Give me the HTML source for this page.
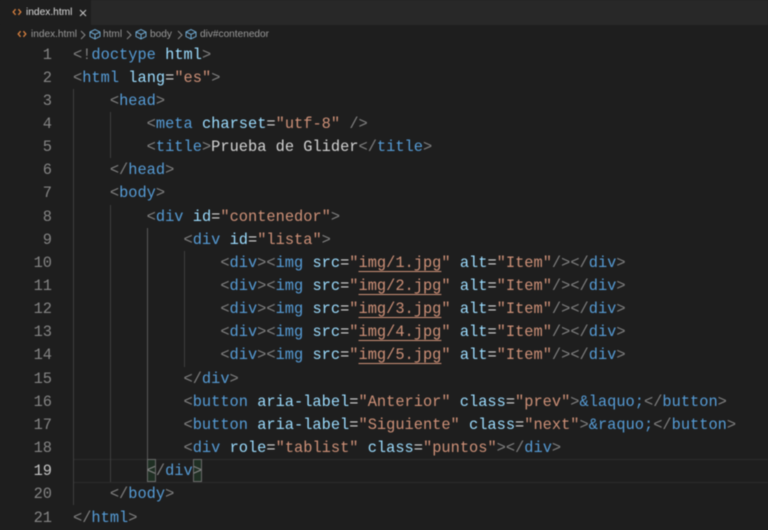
<!DOCTYPE html>
<html lang="es">
<head>
<meta charset="utf-8">
<title>index.html</title>
<style>
html,body{margin:0;padding:0;background:#1e1e1e;}
body{width:768px;height:527px;overflow:hidden;position:relative;font-family:"Liberation Sans",sans-serif;}
#tabs{position:absolute;left:0;top:0;width:768px;height:25px;background:#282828;}
#tab{position:absolute;left:0;top:0;width:91px;height:25px;background:#1e1e1e;}
.ui{position:absolute;white-space:pre;color:#cfcfcf;}
#crumbs span{position:absolute;top:0;white-space:pre;font-size:10.1px;line-height:16px;color:#9a9a9a;}
.ln{position:absolute;left:20px;width:32px;text-align:right;font:15.35px/23.15px "Liberation Mono",monospace;color:#858585;white-space:pre;}
.c{position:absolute;left:73px;font:15.35px/23.15px "Liberation Mono",monospace;color:#d4d4d4;white-space:pre;}
.p{color:#808080}.t{color:#569cd6}.a{color:#9cdcfe}.s{color:#ce9178}.e{color:#569cd6}
.u{text-decoration:underline;text-underline-offset:3.5px;text-decoration-thickness:1.2px;text-decoration-skip-ink:none;}
.g{position:absolute;width:1px;background:#404040;}
#wrap{position:absolute;left:0;top:0;width:768px;height:527px;filter:blur(.4px);}
</style>
</head>
<body>
<div id="wrap">
<div id="tabs"><div id="tab"></div></div>
<svg style="position:absolute;left:12px;top:7px" width="10" height="10" viewBox="0 0 10 10"><path d="M3.6 2.2 L1.2 5 L3.6 7.8 M6.4 2.2 L8.8 5 L6.4 7.8" fill="none" stroke="#d9813f" stroke-width="1.3"/></svg>
<div class="ui" style="left:26px;top:5px;font-size:10.2px;line-height:16px;color:#dcdcdc">index.html</div>
<svg style="position:absolute;left:78px;top:8px" width="10" height="10" viewBox="0 0 10 10"><path d="M2 2 L8 8 M8 2 L2 8" fill="none" stroke="#c8c8c8" stroke-width="1"/></svg>
<div id="crumbs" style="position:absolute;left:0;top:27px;width:768px;height:16px">
<svg style="position:absolute;left:17px;top:2px" width="10" height="10" viewBox="0 0 10 10"><path d="M3.6 2.2 L1.2 5 L3.6 7.8 M6.4 2.2 L8.8 5 L6.4 7.8" fill="none" stroke="#d9813f" stroke-width="1.3"/></svg>
<span style="left:31px">index.html</span>
<svg style="position:absolute;left:80px;top:3px" width="6" height="10" viewBox="0 0 6 10"><path d="M1 1 L5 5 L1 9" fill="none" stroke="#8a8a8a" stroke-width="1"/></svg>
<svg style="position:absolute;left:89px;top:1px" width="12" height="12" viewBox="0 0 12 12"><path d="M1 4 L6 1.5 L11 4 V8.5 L6 11 L1 8.5 Z M1 4 L6 6.5 L11 4 M6 6.5 V11" fill="none" stroke="#6fa8d0" stroke-width="1"/></svg>
<span style="left:103px">html</span>
<svg style="position:absolute;left:126px;top:3px" width="6" height="10" viewBox="0 0 6 10"><path d="M1 1 L5 5 L1 9" fill="none" stroke="#8a8a8a" stroke-width="1"/></svg>
<svg style="position:absolute;left:135px;top:1px" width="12" height="12" viewBox="0 0 12 12"><path d="M1 4 L6 1.5 L11 4 V8.5 L6 11 L1 8.5 Z M1 4 L6 6.5 L11 4 M6 6.5 V11" fill="none" stroke="#6fa8d0" stroke-width="1"/></svg>
<span style="left:150px">body</span>
<svg style="position:absolute;left:177px;top:3px" width="6" height="10" viewBox="0 0 6 10"><path d="M1 1 L5 5 L1 9" fill="none" stroke="#8a8a8a" stroke-width="1"/></svg>
<svg style="position:absolute;left:185px;top:1px" width="12" height="12" viewBox="0 0 12 12"><path d="M1 4 L6 1.5 L11 4 V8.5 L6 11 L1 8.5 Z M1 4 L6 6.5 L11 4 M6 6.5 V11" fill="none" stroke="#6fa8d0" stroke-width="1"/></svg>
<span style="left:200px">div#contenedor</span>
</div>

<!-- active line -->
<div style="position:absolute;left:73px;top:459px;width:695px;height:22px;border-top:1px solid #2c2c2c;border-bottom:1px solid #2c2c2c"></div>
<!-- guides -->
<div class="g" style="left:73px;top:89px;height:416px"></div>
<div class="g" style="left:110px;top:112px;height:46px"></div>
<div class="g" style="left:110px;top:205px;height:277px"></div>
<div class="g" style="left:147px;top:228px;height:231px;background:#5a5a5a"></div>
<div class="g" style="left:184px;top:251px;height:116px"></div>
<!-- bracket match -->
<div style="position:absolute;left:147px;top:459px;width:7px;height:21px;background:#1f2f23;border:1px solid #6a6a6a"></div>
<div style="position:absolute;left:193px;top:459px;width:7px;height:21px;background:#1f2f23;border:1px solid #6a6a6a"></div>

<div class="ln" style="top:44px">1</div><div class="c" style="top:44px"><span class="p">&lt;!</span><span class="t">doctype</span> <span class="a">html</span><span class="p">&gt;</span></div>
<div class="ln" style="top:67px">2</div><div class="c" style="top:67px"><span class="p">&lt;</span><span class="t">html</span> <span class="a">lang</span>=<span class="s">"es"</span><span class="p">&gt;</span></div>
<div class="ln" style="top:90px">3</div><div class="c" style="top:90px">    <span class="p">&lt;</span><span class="t">head</span><span class="p">&gt;</span></div>
<div class="ln" style="top:113px">4</div><div class="c" style="top:113px">        <span class="p">&lt;</span><span class="t">meta</span> <span class="a">charset</span>=<span class="s">"utf-8"</span> <span class="p">/&gt;</span></div>
<div class="ln" style="top:136px">5</div><div class="c" style="top:136px">        <span class="p">&lt;</span><span class="t">title</span><span class="p">&gt;</span>Prueba de Glider<span class="p">&lt;/</span><span class="t">title</span><span class="p">&gt;</span></div>
<div class="ln" style="top:159px">6</div><div class="c" style="top:159px">    <span class="p">&lt;/</span><span class="t">head</span><span class="p">&gt;</span></div>
<div class="ln" style="top:182px">7</div><div class="c" style="top:182px">    <span class="p">&lt;</span><span class="t">body</span><span class="p">&gt;</span></div>
<div class="ln" style="top:206px">8</div><div class="c" style="top:206px">        <span class="p">&lt;</span><span class="t">div</span> <span class="a">id</span>=<span class="s">"contenedor"</span><span class="p">&gt;</span></div>
<div class="ln" style="top:229px">9</div><div class="c" style="top:229px">            <span class="p">&lt;</span><span class="t">div</span> <span class="a">id</span>=<span class="s">"lista"</span><span class="p">&gt;</span></div>
<div class="ln" style="top:252px">10</div><div class="c" style="top:252px">                <span class="p">&lt;</span><span class="t">div</span><span class="p">&gt;&lt;</span><span class="t">img</span> <span class="a">src</span>=<span class="s">"<span class="u">img/1.jpg</span>"</span> <span class="a">alt</span>=<span class="s">"Item"</span><span class="p">/&gt;&lt;/</span><span class="t">div</span><span class="p">&gt;</span></div>
<div class="ln" style="top:275px">11</div><div class="c" style="top:275px">                <span class="p">&lt;</span><span class="t">div</span><span class="p">&gt;&lt;</span><span class="t">img</span> <span class="a">src</span>=<span class="s">"<span class="u">img/2.jpg</span>"</span> <span class="a">alt</span>=<span class="s">"Item"</span><span class="p">/&gt;&lt;/</span><span class="t">div</span><span class="p">&gt;</span></div>
<div class="ln" style="top:298px">12</div><div class="c" style="top:298px">                <span class="p">&lt;</span><span class="t">div</span><span class="p">&gt;&lt;</span><span class="t">img</span> <span class="a">src</span>=<span class="s">"<span class="u">img/3.jpg</span>"</span> <span class="a">alt</span>=<span class="s">"Item"</span><span class="p">/&gt;&lt;/</span><span class="t">div</span><span class="p">&gt;</span></div>
<div class="ln" style="top:321px">13</div><div class="c" style="top:321px">                <span class="p">&lt;</span><span class="t">div</span><span class="p">&gt;&lt;</span><span class="t">img</span> <span class="a">src</span>=<span class="s">"<span class="u">img/4.jpg</span>"</span> <span class="a">alt</span>=<span class="s">"Item"</span><span class="p">/&gt;&lt;/</span><span class="t">div</span><span class="p">&gt;</span></div>
<div class="ln" style="top:344px">14</div><div class="c" style="top:344px">                <span class="p">&lt;</span><span class="t">div</span><span class="p">&gt;&lt;</span><span class="t">img</span> <span class="a">src</span>=<span class="s">"<span class="u">img/5.jpg</span>"</span> <span class="a">alt</span>=<span class="s">"Item"</span><span class="p">/&gt;&lt;/</span><span class="t">div</span><span class="p">&gt;</span></div>
<div class="ln" style="top:368px">15</div><div class="c" style="top:368px">            <span class="p">&lt;/</span><span class="t">div</span><span class="p">&gt;</span></div>
<div class="ln" style="top:391px">16</div><div class="c" style="top:391px">            <span class="p">&lt;</span><span class="t">button</span> <span class="a">aria-label</span>=<span class="s">"Anterior"</span> <span class="a">class</span>=<span class="s">"prev"</span><span class="p">&gt;</span><span class="e">&amp;laquo;</span><span class="p">&lt;/</span><span class="t">button</span><span class="p">&gt;</span></div>
<div class="ln" style="top:414px">17</div><div class="c" style="top:414px">            <span class="p">&lt;</span><span class="t">button</span> <span class="a">aria-label</span>=<span class="s">"Siguiente"</span> <span class="a">class</span>=<span class="s">"next"</span><span class="p">&gt;</span><span class="e">&amp;raquo;</span><span class="p">&lt;/</span><span class="t">button</span><span class="p">&gt;</span></div>
<div class="ln" style="top:437px">18</div><div class="c" style="top:437px">            <span class="p">&lt;</span><span class="t">div</span> <span class="a">role</span>=<span class="s">"tablist"</span> <span class="a">class</span>=<span class="s">"puntos"</span><span class="p">&gt;&lt;/</span><span class="t">div</span><span class="p">&gt;</span></div>
<div class="ln" style="top:460px;color:#c6c6c6">19</div><div class="c" style="top:460px">        <span class="p">&lt;/</span><span class="t">div</span><span class="p">&gt;</span></div>
<div class="ln" style="top:483px">20</div><div class="c" style="top:483px">    <span class="p">&lt;/</span><span class="t">body</span><span class="p">&gt;</span></div>
<div class="ln" style="top:507px">21</div><div class="c" style="top:507px"><span class="p">&lt;/</span><span class="t">html</span><span class="p">&gt;</span></div>
</div>
</body>
</html>
